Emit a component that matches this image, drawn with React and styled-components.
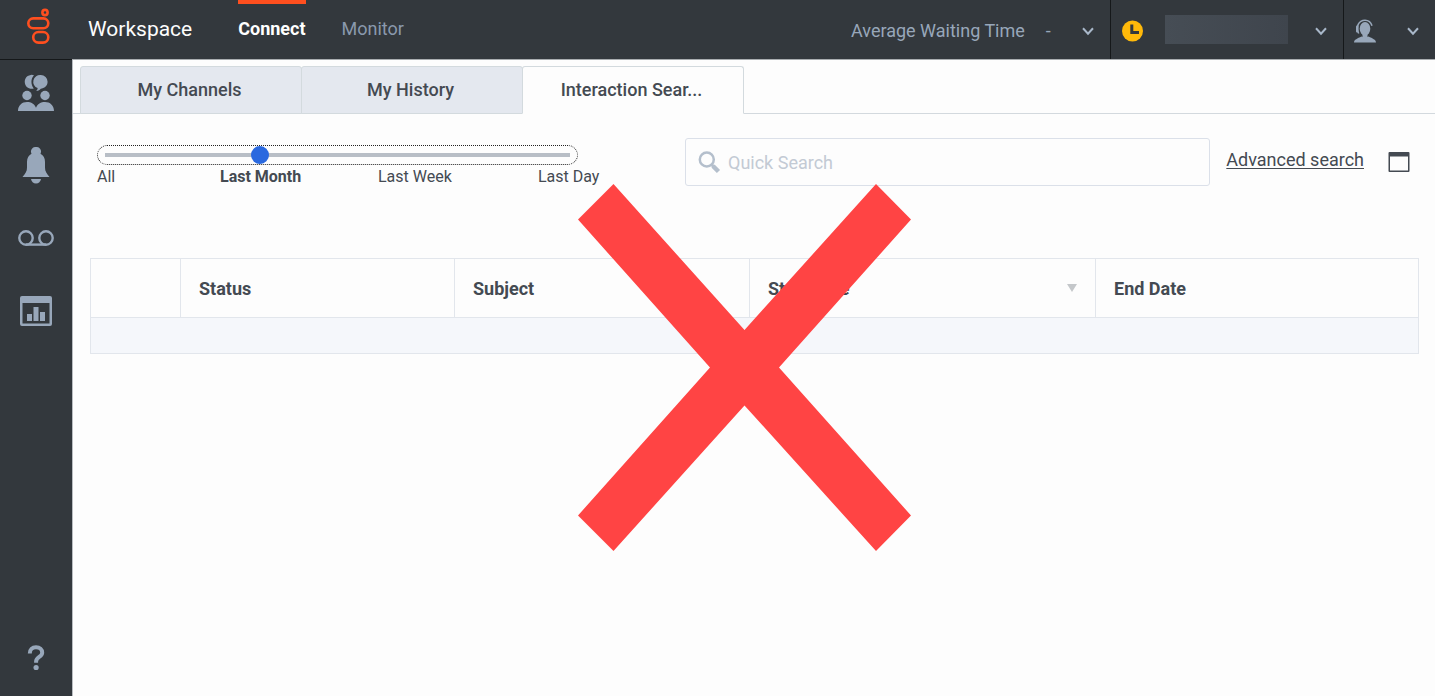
import React, { useState } from "react";
import styled, { createGlobalStyle } from "styled-components";

const GlobalStyle = createGlobalStyle`
  * {
    box-sizing: border-box;
  }
  body {
    margin: 0;
    background: #fdfdfd;
    color: #444a52;
    font-family: Roboto, "Liberation Sans", sans-serif;
  }
  button {
    border: none;
    padding: 0;
    background: none;
    font-family: inherit;
    cursor: pointer;
  }
  svg {
    display: block;
  }
`;
const Page = styled.div`
  min-height: 100vh;
  display: flex;
  flex-direction: column;
`;
const Header = styled.header`
  height: 60px;
  display: flex;
  background: #33383d;
  border-bottom: 1px solid #a9adb0;
`;
const LogoLink = styled.a`
  width: 72px;
  display: flex;
  justify-content: center;
  margin-bottom: -1px;
  padding: 8px 0 0 4px;
  background: #33383d;
  border-bottom: 1px solid #15181a;
`;
const Title = styled.h1`
  margin: 0 0 0 16px;
  font-size: 21px;
  line-height: 58px;
  font-weight: 400;
  color: #fdfdfd;
`;
const Nav = styled.nav`
  display: flex;
  gap: 36px;
  margin-left: 46px;
`;
const NavLink = styled.a`
  border-top: 4px solid ${(props) => (props.$active ? "#ff4f1f" : "transparent")};
  font-size: 18px;
  line-height: 50px;
  font-weight: ${(props) => (props.$active ? 700 : 400)};
  color: ${(props) => (props.$active ? "#ffffff" : "#8a99ad")};
  text-decoration: none;
`;
const HeaderRight = styled.div`
  display: flex;
  margin-left: auto;
`;
const HeaderButton = styled.button`
  display: flex;
  align-items: center;
  justify-content: space-between;
  width: ${(props) => props.$width};
  padding: 2px 16px 0 ${(props) => props.$left};
  border-left: 1px solid ${(props) => (props.$divided ? "#15181a" : "transparent")};
  font-size: 18px;
  color: #98a7ba;
`;
const Metric = styled.span`
  display: flex;
  gap: 21px;
`;
const UserName = styled.span`
  width: 123px;
  height: 29px;
  margin: 0 10px 3px 5px;
  background: linear-gradient(90deg, #464d55, #3f454d);
`;
const Body = styled.div`
  flex: 1;
  display: flex;
`;
const Sidebar = styled.nav`
  width: 73px;
  display: flex;
  flex-direction: column;
  align-items: center;
  background: #33383d;
  border-right: 1px solid #b9bdc1;
`;
const SideButton = styled.button`
  width: 100%;
  height: ${(props) => (props.$last ? "68px" : "73px")};
  padding-bottom: 8px;
  display: flex;
  align-items: center;
  justify-content: center;
  color: #98a7ba;
  ${(props) => props.$last && "margin-top: auto;"}
`;
const Main = styled.main`
  flex: 1;
  min-width: 0;
  padding-top: 6px;
`;
const Tabs = styled.div`
  display: flex;
  padding-left: 7px;
  border-bottom: 1px solid #d3d9de;
`;
const Tab = styled.button`
  width: 222px;
  height: 48px;
  margin: 0 -1px -1px 0;
  padding: 0 3px 2px 0;
  border: 1px solid #d3dade;
  border-bottom-color: ${(props) => (props.$active ? "#fdfdfd" : "#d3dade")};
  border-radius: 3px 3px 0 0;
  background: ${(props) => (props.$active ? "#fdfdfd" : "#e4e8ef")};
  font-size: 18px;
  font-weight: 500;
  color: #444a52;
`;
const SearchBar = styled.div`
  display: flex;
  align-items: flex-start;
  padding: 24px 25px 0 24px;
`;
const Period = styled.div`
  width: 504px;
  flex: none;
  padding-top: 7px;
`;
const Range = styled.input`
  appearance: none;
  display: block;
  width: 481px;
  height: 20px;
  margin: 0;
  border: 1px dotted #222222;
  border-radius: 10px;
  background: transparent;
  outline: none;
  &::-webkit-slider-runnable-track {
    height: 4px;
    margin: 0 -2px;
    background: linear-gradient(#b8bec6, #b8bec6) center / calc(100% - 18px) 4px no-repeat;
  }
  &::-webkit-slider-thumb {
    appearance: none;
    width: 18px;
    height: 18px;
    margin-top: -7px;
    border-radius: 50%;
    background: #2a69df;
  }
`;
const PeriodLabels = styled.div`
  display: grid;
  grid-template-columns: 123px 158px 160px auto;
  justify-items: start;
`;
const PeriodLabel = styled.button`
  font-size: 16px;
  line-height: 24px;
  font-weight: ${(props) => (props.$active ? 700 : 400)};
  color: #444a52;
`;
const SearchField = styled.label`
  flex: 1;
  height: 48px;
  display: flex;
  align-items: center;
  gap: 7px;
  margin-left: 84px;
  padding: 0 12px;
  border: 1px solid #dbe0e9;
  border-radius: 3px;
  input {
    flex: 1;
    min-width: 0;
    border: none;
    outline: none;
    padding: 1px 0 0;
    background: transparent;
    font-family: inherit;
    font-size: 18px;
    color: #444a52;
  }
  input::placeholder {
    color: #c3cad4;
  }
`;
const AdvancedLink = styled.a`
  margin: 0 24px 0 16px;
  font-size: 18px;
  line-height: 43px;
  color: #444a52;
  text-underline-offset: 2px;
`;
const LayoutButton = styled.button`
  padding-top: 14px;
  color: #444a52;
`;
const Results = styled.div`
  padding: 69px 16px 0 17px;
`;
const Table = styled.table`
  width: 100%;
  table-layout: fixed;
  border-collapse: collapse;
  th,
  td {
    border: 1px solid #e2e6ec;
  }
  th {
    height: 59px;
    padding: 0 18px;
    text-align: left;
    font-size: 18px;
    font-weight: 700;
  }
  td {
    height: 36px;
    padding: 0;
    background: #f5f7fb;
  }
`;
const SortHead = styled.span`
  display: flex;
  align-items: center;
  justify-content: space-between;
`;
const CrossMark = styled.svg`
  position: absolute;
  left: 578px;
  top: 184px;
  pointer-events: none;
`;

const Chevron = () => (
  <svg width="12" height="11" viewBox="0 0 12 11" fill="none" stroke="#a9b8ca" strokeWidth="2">
    <path d="M1 3.3l5 5.4 5-5.4" />
  </svg>
);

const Logo = () => (
  <svg width="24" height="37" viewBox="0 0 24 37" fill="none" stroke="#ff4f1f" strokeWidth="2.6">
    <circle cx="19" cy="4.5" r="2.6" />
    <rect x="2.3" y="10.4" width="20" height="9.8" rx="4.9" />
    <rect x="7.2" y="24" width="15.1" height="10.6" rx="5.3" />
  </svg>
);

const PeopleIcon = () => (
  <svg width="36" height="38" viewBox="0 0 36 38" fill="currentColor">
    <path d="M16 1.2a7 7 0 1 0-.2 13.3C12.6 10.4 12.600 4.800 16 1.200z" />
    <path d="M22.800 1a6.800 6.800 0 0 1 6.800 6.800c0 4.400-3.600 6.600-6.800 7-.9 1.300-2.300 2-4.600 2.200 1-.8 1.500-1.800 1.400-2.900A6.800 6.800 0 0 1 22.800 1z" />
    <circle cx="9" cy="21.500" r="4.700" />
    <circle cx="27" cy="21.500" r="4.700" />
    <path d="M0 37c0-5.500 4-8.900 9-8.900 4.200 0 7.600 2 9 5.700 1.400-3.700 4.800-5.700 9-5.700 5 0 9 3.400 9 8.900z" />
  </svg>
);

const BellIcon = () => (
  <svg width="28" height="37" viewBox="0 0 28 37" fill="currentColor">
    <path d="M14 0a4.600 4.600 0 0 1 4.500 6.700c3 1.500 4.500 4.500 4.500 8.300v5.500c0 4 1.500 5.800 4.500 9.500H.5c3-3.700 4.500-5.500 4.500-9.500V15c0-3.800 1.500-6.800 4.500-8.300A4.600 4.600 0 0 1 14 0z" />
    <path d="M9 32h10c-.4 2.600-2.300 4.500-5 4.500S9.400 34.600 9 32z" />
  </svg>
);

const VoicemailIcon = () => (
  <svg width="36" height="18" viewBox="0 0 36 18" fill="none" stroke="currentColor" strokeWidth="2.400">
    <circle cx="8" cy="8" r="6.700" />
    <circle cx="28" cy="8" r="6.700" />
    <path d="M8 14.600h20" />
  </svg>
);

const ChartIcon = () => (
  <svg width="32" height="32" viewBox="0 0 32 32" fill="currentColor">
    <path
      fillRule="evenodd"
      d="M2 0h28a2 2 0 0 1 2 2v26a2 2 0 0 1-2 2H2a2 2 0 0 1-2-2V2a2 2 0 0 1 2-2zM2.500 7v20.500h27V7z"
    />
    <path d="M7 18h5v7H7zM13.500 11h5v14h-5zM20 16h5v9h-5z" />
  </svg>
);

const HelpIcon = () => (
  <svg width="18" height="26" viewBox="0 0 18 26">
    <path
      d="M2.800 8.500C2.800 4.500 5.200 2.300 9 2.300s6.200 2 6.200 5.400c0 4.400-6.100 4.200-6.100 8.800v1.300"
      fill="none"
      stroke="currentColor"
      strokeWidth="4"
    />
    <circle cx="9.100" cy="22.500" r="2.600" fill="currentColor" />
  </svg>
);

const ClockIcon = () => (
  <svg width="22" height="22" viewBox="0 0 22 22">
    <circle cx="11.500" cy="11" r="10.500" fill="#ffb90a" />
    <path d="M10.800 4.500v8H18" fill="none" stroke="#33383d" strokeWidth="3" />
  </svg>
);

const AgentIcon = () => (
  <svg width="22" height="24" viewBox="0 0 22 24" fill="currentColor">
    <ellipse cx="11" cy="9.700" rx="5.300" ry="6.700" />
    <path d="M8.500 14h5v5h-5z" />
    <path d="M0 23.500c0-3 3.500-4 7.500-6 2.300 1.500 4.700 1.500 7 0 4 2 7.500 3 7.500 6z" />
    <path
      d="M4.700 14.500C1.500 8 4.500 1.200 11 1.200c3.500 0 6 2.200 7 5.500"
      fill="none"
      stroke="currentColor"
      strokeWidth="1.600"
    />
    <rect x="2" y="6.500" width="2.500" height="7" rx="1" />
  </svg>
);

const SearchIcon = () => (
  <svg width="23" height="23" viewBox="0 0 23 23" fill="none" stroke="#b4bfcc">
    <circle cx="8.800" cy="8.500" r="7" strokeWidth="2.500" />
    <path d="M13.500 13.500l3 3" strokeWidth="3" />
    <path d="M15 15l5.500 5.500" strokeWidth="4.500" />
  </svg>
);

const WindowIcon = () => (
  <svg width="22" height="20" viewBox="0 0 22 20" fill="currentColor">
    <path
      fillRule="evenodd"
      d="M1.500 0h19a1 1 0 0 1 1 1v18a1 1 0 0 1-1 1h-19a1 1 0 0 1-1-1V1a1 1 0 0 1 1-1zM2 4.500v14h18v-14z"
    />
  </svg>
);

const periods = ["All", "Last Month", "Last Week", "Last Day"];
const tabs = ["My Channels", "My History", "Interaction Sear..."];
const sideItems = [
  { label: "Contacts", Icon: PeopleIcon },
  { label: "Notifications", Icon: BellIcon },
  { label: "Voicemail", Icon: VoicemailIcon },
  { label: "Statistics", Icon: ChartIcon },
];

const App = () => {
  const [period, setPeriod] = useState(1);
  const [tab, setTab] = useState(2);
  return (
    <Page>
      <GlobalStyle />
      <Header>
        <LogoLink href="#" aria-label="Home">
          <Logo />
        </LogoLink>
        <Title>Workspace</Title>
        <Nav>
          <NavLink href="#connect" $active>
            Connect
          </NavLink>
          <NavLink href="#monitor">Monitor</NavLink>
        </Nav>
        <HeaderRight>
          <HeaderButton $width="275px" $left="15px">
            <Metric>
              <span>Average Waiting Time</span>
              <span>-</span>
            </Metric>
            <Chevron />
          </HeaderButton>
          <HeaderButton $width="233px" $left="10px" $divided aria-label="Status">
            <ClockIcon />
            <UserName />
            <Chevron />
          </HeaderButton>
          <HeaderButton $width="92px" $left="10px" $divided aria-label="Agent">
            <AgentIcon />
            <Chevron />
          </HeaderButton>
        </HeaderRight>
      </Header>
      <Body>
        <Sidebar>
          {sideItems.map(({ label, Icon }) => (
            <SideButton key={label} aria-label={label}>
              <Icon />
            </SideButton>
          ))}
          <SideButton aria-label="Help" $last>
            <HelpIcon />
          </SideButton>
        </Sidebar>
        <Main>
          <Tabs role="tablist">
            {tabs.map((name, i) => (
              <Tab
                key={name}
                role="tab"
                aria-selected={tab === i}
                $active={tab === i}
                onClick={() => setTab(i)}
              >
                {name}
              </Tab>
            ))}
          </Tabs>
          <SearchBar>
            <Period>
              <Range
                type="range"
                min="0"
                max="3"
                value={period}
                aria-label="Period"
                onChange={(e) => setPeriod(Number(e.target.value))}
              />
              <PeriodLabels>
                {periods.map((name, i) => (
                  <PeriodLabel key={name} $active={period === i} onClick={() => setPeriod(i)}>
                    {name}
                  </PeriodLabel>
                ))}
              </PeriodLabels>
            </Period>
            <SearchField>
              <SearchIcon />
              <input type="text" placeholder="Quick Search" aria-label="Quick Search" />
            </SearchField>
            <AdvancedLink href="#advanced">Advanced search</AdvancedLink>
            <LayoutButton aria-label="Layout">
              <WindowIcon />
            </LayoutButton>
          </SearchBar>
          <Results>
            <Table>
              <colgroup>
                <col width="90" />
                <col width="274" />
                <col width="295" />
                <col width="346" />
                <col />
              </colgroup>
              <thead>
                <tr>
                  <th aria-label="Media" />
                  <th>Status</th>
                  <th>Subject</th>
                  <th>
                    <SortHead>
                      Start Date
                      <svg width="10" height="8" viewBox="0 0 10 8" fill="#c4c7ca">
                        <path d="M0 0h10L5 8z" />
                      </svg>
                    </SortHead>
                  </th>
                  <th>End Date</th>
                </tr>
              </thead>
              <tbody>
                <tr>
                  <td colSpan="5" />
                </tr>
              </tbody>
            </Table>
          </Results>
        </Main>
      </Body>
      <CrossMark width="333" height="367" viewBox="0 0 333 367" fill="#ff4444">
        <path d="M35.500 0L166.500 146 298 0l35 35.500L201 183.500l132 148L298 367 166.500 221.500 35.500 367 0 331.500l132-148L0 35.500z" />
      </CrossMark>
    </Page>
  );
};

export default App;
